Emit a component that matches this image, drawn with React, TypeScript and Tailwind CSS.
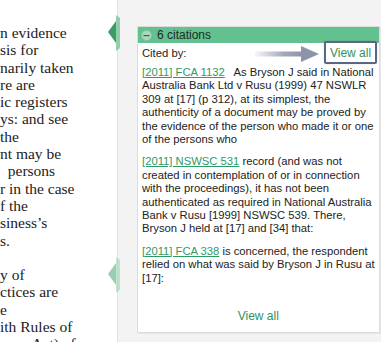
import React from 'react'

const bookLines = [
  'n evidence',
  'sis for',
  'narily taken',
  're are',
  'ic registers',
  'ys: and see',
  'the',
  'nt may be',
  '\u00a0 persons',
  'r in the case',
  'f the',
  'siness\u2019s',
  's.',
  '\u00a0',
  'y of',
  'ctices are',
  'e',
  'ith Rules of',
  'ence Act) of',
]

const Marker = ({ faded }: { faded?: boolean }) => (
  <svg width="14" height="36" viewBox="0 0 14 36" className={faded ? 'opacity-50' : ''}>
    <polygon points="9,0 13,3 13,33 9,36" fill="#8fd0ab" />
    <polygon points="1,17 9,6 9,28" fill="#3c9c66" />
  </svg>
)

const Arrow = () => (
  <svg width="66" height="20" viewBox="0 0 66 20">
    <defs>
      <linearGradient id="shaft" x1="0" x2="1" y1="0" y2="0">
        <stop offset="0" stopColor="#9aa0b2" stopOpacity="0.1" />
        <stop offset="0.6" stopColor="#9399ad" stopOpacity="0.85" />
        <stop offset="1" stopColor="#8e94a8" />
      </linearGradient>
    </defs>
    <rect x="0" y="7.5" width="48" height="5" fill="url(#shaft)" />
    <polygon points="46,2 64,10 46,18" fill="#8e94a8" />
  </svg>
)

const CiteLink = ({ children }: { children: React.ReactNode }) => (
  <a href="#" className="text-[#2f9a66] underline underline-offset-1">
    {children}
  </a>
)

export default function App() {
  return (
    <div className="relative flex h-[342px] w-[381px] overflow-hidden bg-white">
      {/* book text, clipped at the left */}
      <div className="w-[117px] shrink-0 overflow-hidden pt-[24px] text-[15.5px] leading-[17.3px] text-[#222] [font-family:'Liberation_Serif',serif]">
        {bookLines.map((l, i) => (
          <div key={i} className="whitespace-nowrap">
            {l}
          </div>
        ))}
      </div>

      {/* side panel */}
      <div className="flex-1 border-l border-[#e2e2e2] bg-[#f3f3f3] pt-[26px] pl-[19px] pr-[7px] [font-family:'Liberation_Sans',Arial,sans-serif]">
        <div className="relative h-[307px] border border-[#dcdcdc] bg-white shadow-[1px_1px_0_#e6e6e6]">
          <div className="flex h-[16px] items-center gap-[5px] bg-[#62c18e] pl-[3px] text-[12px] text-[#1f2a24]">
            <svg width="11" height="11" viewBox="0 0 11 11">
              <circle cx="5.5" cy="5.5" r="5" fill="#a9d9bd" stroke="#8dbfa3" />
              <rect x="2.5" y="5" width="6" height="1.2" fill="#4d5a52" />
            </svg>
            <span>6 citations</span>
          </div>

          <div className="whitespace-nowrap px-[4px] text-[11.25px] leading-[13.4px] text-[#222]">
            <div className="flex h-[22px] items-center">Cited by:</div>

            <p className="mt-[1px]">
              <CiteLink>[2011] FCA 1132</CiteLink>
              {'\u00a0\u00a0 '}As Bryson J said in National
              <br />
              Australia Bank Ltd v Rusu (1999) 47 NSWLR
              <br />
              309 at [17] (p 312), at its simplest, the
              <br />
              authenticity of a document may be proved by
              <br />
              the evidence of the person who made it or one
              <br />
              of the persons who
            </p>

            <p className="mt-[9px]">
              <CiteLink>[2011] NSWSC 531</CiteLink> record (and was not
              <br />
              created in contemplation of or in connection
              <br />
              with the proceedings), it has not been
              <br />
              authenticated as required in National Australia
              <br />
              Bank v Rusu [1999] NSWSC 539. There,
              <br />
              Bryson J held at [17] and [34] that:
            </p>

            <p className="mt-[9px]">
              <CiteLink>[2011] FCA 338</CiteLink> is concerned, the respondent
              <br />
              relied on what was said by Bryson J in Rusu at
              <br />
              [17]:
            </p>
          </div>

          <div className="absolute bottom-[7px] left-0 right-0 text-center text-[12px] text-[#2f9163]">
            <a href="#">View all</a>
          </div>

          {/* highlight callout */}
          <div className="absolute left-[117px] top-[17px]">
            <Arrow />
          </div>
          <div className="absolute left-[186px] top-[14px] flex h-[23px] w-[53px] items-center justify-center rounded-[2px] border-2 border-[#5b6687] bg-white/80 text-[12px] text-[#2f9163] shadow-[0_0_2px_rgba(0,0,0,0.15)]">
            View all
          </div>
        </div>
      </div>

      {/* section markers on the divider */}
      <div className="absolute left-[107px] top-[15px]">
        <Marker />
      </div>
      <div className="absolute left-[107px] top-[257px]">
        <Marker faded />
      </div>
    </div>
  )
}
